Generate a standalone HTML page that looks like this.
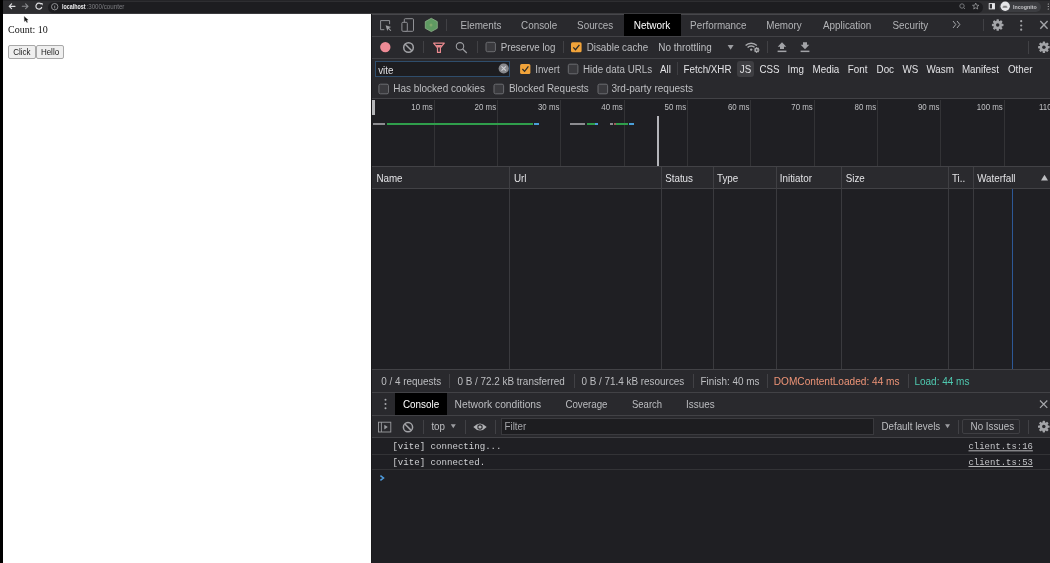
<!DOCTYPE html>
<html><head><meta charset="utf-8">
<style>
html,body{margin:0;padding:0;width:1050px;height:563px;overflow:hidden;background:#202023;}
body>div,body>svg{position:absolute;}
.t{white-space:nowrap;line-height:20px;height:20px;will-change:transform;}
</style></head><body>
<div style="left:0px;top:0px;width:1050px;height:13px;background:#2e2e31;"></div>
<div style="left:0px;top:0px;width:1050px;height:1px;background:#242427;"></div>
<div style="left:0px;top:13px;width:1050px;height:1px;background:#3a3a3d;"></div>
<div style="left:48px;top:1.5px;width:935px;height:11px;background:#1d1d20;border-radius:6px;"></div>
<div style="left:999px;top:2px;width:42px;height:10px;background:#3c3d41;border-radius:5px;"></div>
<div style="left:0px;top:0px;width:3px;height:563px;background:#000;"></div>
<svg style="left:0;top:0" width="120" height="14" viewBox="0 0 120 14">
<g stroke="#dcdcdf" stroke-width="1.2" fill="none" stroke-linecap="round">
<path d="M9.2 6.3 H15 M9.2 6.3 L11.6 3.9 M9.2 6.3 L11.6 8.7"/>
</g>
<g stroke="#8a8b8e" stroke-width="1.1" fill="none" stroke-linecap="round">
<path d="M22.3 6.3 H28 M28 6.3 L25.6 3.9 M28 6.3 L25.6 8.7"/>
</g>
<path d="M41.2 4.2 A3 3 0 1 0 41.8 7" stroke="#dcdcdf" stroke-width="1.2" fill="none"/>
<path d="M40 3 L42.6 3 L42.6 5.6 Z" fill="#dcdcdf"/>
<circle cx="54.7" cy="6.7" r="3.2" stroke="#9a9b9e" stroke-width="0.9" fill="none"/>
<path d="M54.7 5.6 V8.4" stroke="#9a9b9e" stroke-width="0.9"/>
</svg>
<svg style="left:950px;top:0" width="100" height="14" viewBox="950 0 100 14">
<circle cx="962" cy="6" r="2.2" stroke="#7c7d81" stroke-width="0.9" fill="none"/>
<path d="M963.6 7.6 L965 9" stroke="#7c7d81" stroke-width="0.9"/>
<path d="M975.7 3 L976.6 5.2 L978.9 5.3 L977.1 6.8 L977.7 9 L975.7 7.8 L973.7 9 L974.3 6.8 L972.5 5.3 L974.8 5.2 Z" stroke="#a4a5a8" stroke-width="0.7" fill="none"/>
<rect x="989.2" y="3.6" width="5.3" height="5.3" stroke="#e8e8ea" stroke-width="0.9" fill="none"/>
<rect x="992" y="3.6" width="2.5" height="5.3" fill="#e8e8ea"/>
<circle cx="1005.2" cy="6.3" r="4.7" fill="#e6e6e8"/>
<path d="M1002.6 7.2 h4.8 M1003.3 6.3 h3.4" stroke="#555" stroke-width="0.8"/>
<circle cx="1048.3" cy="4" r="0.6" fill="#ccc"/><circle cx="1048.3" cy="6.5" r="0.6" fill="#ccc"/><circle cx="1048.3" cy="9" r="0.6" fill="#ccc"/>
</svg>
<div style="left:3px;top:14px;width:369px;height:549px;background:#ffffff;"></div>
<div style="left:8px;top:45px;width:28px;height:14px;background:#efefef;border:1px solid #a8a8a8;border-radius:2px;box-sizing:border-box;"></div>
<div style="left:36px;top:45px;width:28px;height:14px;background:#efefef;border:1px solid #a8a8a8;border-radius:2px;box-sizing:border-box;"></div>
<svg style="left:22px;top:15px" width="10" height="10" viewBox="0 0 10 10">
<path d="M2.2 1.4 L2.5 6.6 L3.6 5.6 L4.9 7.6 L5.6 7.2 L4.6 5.2 L6.2 5 Z" fill="#111" stroke="#444" stroke-width="0.3"/>
</svg>
<div style="left:372px;top:14px;width:678px;height:549px;background:#1f1f23;"></div>
<div style="left:371px;top:14px;width:1px;height:549px;background:#1a1a1c;"></div>
<div style="left:372px;top:14px;width:678px;height:22px;background:#29292d;"></div>
<div style="left:372px;top:13.5px;width:678px;height:1px;background:#47474b;"></div>
<div style="left:372px;top:36px;width:678px;height:1px;background:#424246;"></div>
<div style="left:624px;top:14px;width:57px;height:22px;background:#000;"></div>
<div style="left:446.3px;top:18.8px;width:1px;height:12.2px;background:#414145;"></div>
<div style="left:982.5px;top:18.8px;width:1px;height:12.2px;background:#414145;"></div>
<svg style="left:372px;top:14px" width="100" height="22" viewBox="372 14 100 22">
<path d="M384.3 29.7 H380.6 V20.6 H389.6 V24.2" stroke="#9c9da1" stroke-width="0.9" fill="none"/>
<path d="M385.6 25.2 L391.2 27 L389 28 L391.3 30.4 L390.5 31.1 L388.2 28.8 L387.3 31 Z" fill="#9c9da1"/>
<rect x="404.3" y="18.7" width="9.2" height="12.6" rx="1" stroke="#9c9da1" stroke-width="0.9" fill="none"/>
<rect x="401.9" y="22.3" width="5.4" height="9" rx="1" stroke="#9c9da1" stroke-width="0.9" fill="#29292c"/>
<path d="M431.3 18.3 L437.3 21.6 V28.3 L431.3 31.6 L425.3 28.3 V21.6 Z" fill="#5f9a62" stroke="#8fb38c" stroke-width="0.8"/>
<circle cx="431" cy="25" r="1.5" fill="#8fb070" opacity="0.7"/>
</svg>
<svg style="left:950px;top:14px" width="100" height="22" viewBox="950 14 100 22">
<path d="M953 21 L955.8 24.5 L953 28 M957 21 L959.8 24.5 L957 28" stroke="#a8a9ad" stroke-width="1" fill="none"/>
</svg>
<svg style="left:0;top:0" width="1050" height="563" viewBox="0 0 1050 563">
<g><rect x="996.48" y="19.20" width="2.44" height="11.60" rx="0.61" transform="rotate(0 997.7 25)" fill="#a3a4a8"/><rect x="996.48" y="19.20" width="2.44" height="11.60" rx="0.61" transform="rotate(45 997.7 25)" fill="#a3a4a8"/><rect x="996.48" y="19.20" width="2.44" height="11.60" rx="0.61" transform="rotate(90 997.7 25)" fill="#a3a4a8"/><rect x="996.48" y="19.20" width="2.44" height="11.60" rx="0.61" transform="rotate(135 997.7 25)" fill="#a3a4a8"/><circle cx="997.7" cy="25" r="4.29" fill="#a3a4a8"/><circle cx="997.7" cy="25" r="1.74" fill="#29292d"/></g>
<circle cx="1021.2" cy="21.2" r="1.1" fill="#a3a4a8"/><circle cx="1021.2" cy="25.5" r="1.1" fill="#a3a4a8"/><circle cx="1021.2" cy="29.7" r="1.1" fill="#a3a4a8"/>
<path d="M1040.3 21.1 L1047.6 28.7 M1047.6 21.1 L1040.3 28.7" stroke="#a3a4a8" stroke-width="1.4"/>
</svg>
<div style="left:372px;top:37px;width:678px;height:21px;background:#29292d;"></div>
<div style="left:372px;top:58px;width:678px;height:1px;background:#424246;"></div>
<div style="left:423.4px;top:40.7px;width:1px;height:12.3px;background:#414145;"></div>
<div style="left:477px;top:40.7px;width:1px;height:12.3px;background:#414145;"></div>
<div style="left:563.3px;top:40.7px;width:1px;height:12.3px;background:#414145;"></div>
<div style="left:766.8px;top:40.7px;width:1px;height:12.3px;background:#414145;"></div>
<div style="left:1028px;top:40.8px;width:1px;height:13.2px;background:#414145;"></div>
<svg style="left:0;top:0" width="1050" height="563" viewBox="0 0 1050 563">
<circle cx="385.3" cy="47.1" r="5.2" fill="#ef8b96"/>
<circle cx="408.5" cy="47.5" r="4.8" stroke="#a2a3a7" stroke-width="1.5" fill="none"/>
<path d="M405.2 44.2 L411.8 50.8" stroke="#a2a3a7" stroke-width="1.5"/>
<path d="M433.6 43.2 H444.3 L440.4 47.8 V52.4 H437.5 V47.8 Z" stroke="#ea8a8f" stroke-width="1.2" fill="none" stroke-linejoin="round"/>
<path d="M435.6 45 H442.3 L440 47.6 H437.9 Z" fill="#ea8a8f"/>
<circle cx="460" cy="46.3" r="3.7" stroke="#9c9da1" stroke-width="1.1" fill="none"/>
<path d="M462.7 49 L466.8 53" stroke="#9c9da1" stroke-width="1.2"/>
<rect x="486" y="42.3" width="9.4" height="9.4" rx="1.5" stroke="#6c6d71" stroke-width="1" fill="#3a3a3e"/>
<rect x="571" y="42.3" width="10.6" height="10" rx="1.5" fill="#f1a33a"/>
<path d="M573.3 47.4 L575.5 49.7 L579.4 44.8" stroke="#2a2a2a" stroke-width="1.3" fill="none"/>
<path d="M727.6 45 H733.6 L730.6 49.8 Z" fill="#9c9da1"/>
<path d="M745.6 45.6 A7.8 7.8 0 0 1 756.8 45.6" stroke="#a9aaad" stroke-width="1.4" fill="none"/>
<path d="M747.6 47.6 A5 5 0 0 1 754.8 47.6" stroke="#a9aaad" stroke-width="1.4" fill="none"/>
<circle cx="751.2" cy="49.6" r="1.2" fill="#a9aaad"/>
<circle cx="756.7" cy="50" r="3.3" fill="#29292c"/>
<g><rect x="756.09" y="47.10" width="1.22" height="5.80" rx="0.30" transform="rotate(0 756.7 50)" fill="#a9aaad"/><rect x="756.09" y="47.10" width="1.22" height="5.80" rx="0.30" transform="rotate(45 756.7 50)" fill="#a9aaad"/><rect x="756.09" y="47.10" width="1.22" height="5.80" rx="0.30" transform="rotate(90 756.7 50)" fill="#a9aaad"/><rect x="756.09" y="47.10" width="1.22" height="5.80" rx="0.30" transform="rotate(135 756.7 50)" fill="#a9aaad"/><circle cx="756.7" cy="50" r="2.15" fill="#a9aaad"/><circle cx="756.7" cy="50" r="0.87" fill="#29292d"/></g>
<path d="M782 42.3 L786.3 46.8 H784 V49 H780 V46.8 H777.7 Z" fill="#a2a3a7"/>
<rect x="777.6" y="50.6" width="8.8" height="1.5" fill="#a2a3a7"/>
<path d="M805 49.2 L800.7 44.7 H803 V42.3 H807 V44.7 H809.3 Z" fill="#a2a3a7"/>
<rect x="800.6" y="50.6" width="8.8" height="1.5" fill="#a2a3a7"/>
<g><rect x="1042.68" y="41.40" width="2.44" height="11.60" rx="0.61" transform="rotate(0 1043.9 47.2)" fill="#a3a4a8"/><rect x="1042.68" y="41.40" width="2.44" height="11.60" rx="0.61" transform="rotate(45 1043.9 47.2)" fill="#a3a4a8"/><rect x="1042.68" y="41.40" width="2.44" height="11.60" rx="0.61" transform="rotate(90 1043.9 47.2)" fill="#a3a4a8"/><rect x="1042.68" y="41.40" width="2.44" height="11.60" rx="0.61" transform="rotate(135 1043.9 47.2)" fill="#a3a4a8"/><circle cx="1043.9" cy="47.2" r="4.29" fill="#a3a4a8"/><circle cx="1043.9" cy="47.2" r="1.74" fill="#29292d"/></g>
</svg>
<div style="left:372px;top:59px;width:678px;height:39px;background:#29292d;"></div>
<div style="left:372px;top:98px;width:678px;height:1px;background:#424246;"></div>
<div style="left:374.5px;top:60.5px;width:135.5px;height:16.5px;background:#1d1d20;border:1px solid #2f4d6b;box-sizing:border-box;"></div>
<svg style="left:0;top:0" width="1050" height="563" viewBox="0 0 1050 563">
<circle cx="503.7" cy="68.5" r="5.1" fill="#88898d"/>
<path d="M501.5 66.3 L505.9 70.7 M505.9 66.3 L501.5 70.7" stroke="#cfd0d3" stroke-width="1.1"/>
<rect x="520.1" y="63.9" width="10.3" height="10" rx="1.5" fill="#f1a33a"/>
<path d="M522.4 69 L524.6 71.3 L528.4 66.4" stroke="#2a2a2a" stroke-width="1.2" fill="none"/>
<rect x="568.3" y="64.2" width="9.6" height="9.6" rx="1.5" stroke="#6c6d71" stroke-width="1" fill="#3a3a3e"/>
<rect x="378.9" y="84.2" width="9.6" height="9.6" rx="1.5" stroke="#6c6d71" stroke-width="1" fill="#3a3a3e"/>
<rect x="494" y="84.2" width="9.6" height="9.6" rx="1.5" stroke="#6c6d71" stroke-width="1" fill="#3a3a3e"/>
<rect x="598" y="84.2" width="9.6" height="9.6" rx="1.5" stroke="#6c6d71" stroke-width="1" fill="#3a3a3e"/>
</svg>
<div style="left:676.8px;top:62.3px;width:1px;height:13.2px;background:#3e3e42;"></div>
<div style="left:736.9px;top:61px;width:16.8px;height:16px;background:#3e3e42;border-radius:3px;"></div>
<div style="left:372px;top:99px;width:678px;height:67px;background:#1f1f23;"></div>
<div style="left:433.8px;top:100px;width:1px;height:66px;background:#333336;"></div>
<div style="left:497.13px;top:100px;width:1px;height:66px;background:#333336;"></div>
<div style="left:560.46px;top:100px;width:1px;height:66px;background:#333336;"></div>
<div style="left:623.79px;top:100px;width:1px;height:66px;background:#333336;"></div>
<div style="left:687.12px;top:100px;width:1px;height:66px;background:#333336;"></div>
<div style="left:750.45px;top:100px;width:1px;height:66px;background:#333336;"></div>
<div style="left:813.78px;top:100px;width:1px;height:66px;background:#333336;"></div>
<div style="left:877.11px;top:100px;width:1px;height:66px;background:#333336;"></div>
<div style="left:940.44px;top:100px;width:1px;height:66px;background:#333336;"></div>
<div style="left:1003.77px;top:100px;width:1px;height:66px;background:#333336;"></div>
<div style="left:372px;top:100px;width:2.6px;height:14.5px;background:#b5b6b9;"></div>
<div style="left:373px;top:123px;width:12px;height:2px;background:#8c8c90;"></div>
<div style="left:386.8px;top:123px;width:146.2px;height:2px;background:#2f9e4b;"></div>
<div style="left:534px;top:123px;width:4.600000000000023px;height:2px;background:#4a9fd8;"></div>
<div style="left:569.5px;top:123px;width:15.299999999999955px;height:2px;background:#8c8c90;"></div>
<div style="left:586.7px;top:123px;width:8.299999999999955px;height:2px;background:#2f9e4b;"></div>
<div style="left:595.2px;top:123px;width:2.5px;height:2px;background:#4a9fd8;"></div>
<div style="left:609.9px;top:123px;width:3.3999999999999773px;height:2px;background:#8c8c90;"></div>
<div style="left:614px;top:123px;width:1.7999999999999545px;height:2px;background:#a05a5a;"></div>
<div style="left:616.2px;top:123px;width:11.799999999999955px;height:2px;background:#2f9e4b;"></div>
<div style="left:629px;top:123px;width:4.899999999999977px;height:2px;background:#4a9fd8;"></div>
<div style="left:657px;top:115.5px;width:1.6px;height:50.5px;background:#b4b5ba;"></div>
<div style="left:372px;top:165.5px;width:678px;height:1px;background:#424246;"></div>
<div style="left:372px;top:166.5px;width:678px;height:22.5px;background:#2a2a2e;"></div>
<div style="left:372px;top:188px;width:678px;height:1px;background:#424246;"></div>
<div style="left:509px;top:166.5px;width:1px;height:22px;background:#404044;"></div>
<div style="left:509px;top:189px;width:1px;height:180px;background:#3a3a3e;"></div>
<div style="left:661px;top:166.5px;width:1px;height:22px;background:#404044;"></div>
<div style="left:661px;top:189px;width:1px;height:180px;background:#3a3a3e;"></div>
<div style="left:713px;top:166.5px;width:1px;height:22px;background:#404044;"></div>
<div style="left:713px;top:189px;width:1px;height:180px;background:#3a3a3e;"></div>
<div style="left:776px;top:166.5px;width:1px;height:22px;background:#404044;"></div>
<div style="left:776px;top:189px;width:1px;height:180px;background:#3a3a3e;"></div>
<div style="left:841px;top:166.5px;width:1px;height:22px;background:#404044;"></div>
<div style="left:841px;top:189px;width:1px;height:180px;background:#3a3a3e;"></div>
<div style="left:948px;top:166.5px;width:1px;height:22px;background:#404044;"></div>
<div style="left:948px;top:189px;width:1px;height:180px;background:#3a3a3e;"></div>
<div style="left:973px;top:166.5px;width:1px;height:22px;background:#404044;"></div>
<div style="left:973px;top:189px;width:1px;height:180px;background:#3a3a3e;"></div>
<svg style="left:0;top:0" width="1050" height="563" viewBox="0 0 1050 563">
<path d="M1041 180.5 H1048 L1044.5 174.8 Z" fill="#bdbec1"/>
</svg>
<div style="left:1012.3px;top:189px;width:1px;height:180px;background:#2d5896;"></div>
<div style="left:372px;top:369px;width:678px;height:1px;background:#424246;"></div>
<div style="left:372px;top:370px;width:678px;height:22px;background:#29292d;"></div>
<div style="left:372px;top:392px;width:678px;height:1px;background:#424246;"></div>
<div style="left:449.3px;top:374px;width:1px;height:14px;background:#414145;"></div>
<div style="left:573.6px;top:374px;width:1px;height:14px;background:#414145;"></div>
<div style="left:692.6px;top:374px;width:1px;height:14px;background:#414145;"></div>
<div style="left:767px;top:374px;width:1px;height:14px;background:#414145;"></div>
<div style="left:907.5px;top:374px;width:1px;height:14px;background:#414145;"></div>
<div style="left:372px;top:393px;width:678px;height:22px;background:#29292d;"></div>
<div style="left:372px;top:415px;width:678px;height:1px;background:#424246;"></div>
<div style="left:395px;top:393.3px;width:52.4px;height:21.5px;background:#000;"></div>
<svg style="left:0;top:0" width="1050" height="563" viewBox="0 0 1050 563">
<circle cx="385.5" cy="399.8" r="1" fill="#a8a9ad"/><circle cx="385.5" cy="404" r="1" fill="#a8a9ad"/><circle cx="385.5" cy="408.2" r="1" fill="#a8a9ad"/>
<path d="M1040 400.5 L1047.3 407.8 M1047.3 400.5 L1040 407.8" stroke="#a8a9ad" stroke-width="1.2"/>
</svg>
<div style="left:372px;top:416px;width:678px;height:21.4px;background:#29292d;"></div>
<div style="left:372px;top:437.4px;width:678px;height:1px;background:#424246;"></div>
<div style="left:423px;top:420px;width:1px;height:14px;background:#414145;"></div>
<div style="left:465px;top:420px;width:1px;height:14px;background:#414145;"></div>
<div style="left:495px;top:420px;width:1px;height:14px;background:#414145;"></div>
<div style="left:958px;top:420px;width:1px;height:14px;background:#414145;"></div>
<div style="left:1028px;top:420px;width:1px;height:14px;background:#414145;"></div>
<div style="left:500.5px;top:418.3px;width:373.3px;height:16.7px;background:#1d1d20;border:1px solid #3a3a3e;box-sizing:border-box;"></div>
<div style="left:962.2px;top:419px;width:57.8px;height:14.8px;background:transparent;border:1px solid #3f3f43;box-sizing:border-box;border-radius:2px;"></div>
<svg style="left:0;top:0" width="1050" height="563" viewBox="0 0 1050 563">
<rect x="378.5" y="422.2" width="12.3" height="9.8" stroke="#9c9da1" stroke-width="0.9" fill="none"/>
<path d="M381.4 422.2 V432" stroke="#9c9da1" stroke-width="0.9"/>
<path d="M384.3 424.7 L387.8 427.1 L384.3 429.5 Z" fill="#9c9da1"/>
<circle cx="408" cy="427.2" r="4.6" stroke="#a2a3a7" stroke-width="1.5" fill="none"/>
<path d="M404.8 424 L411.2 430.4" stroke="#a2a3a7" stroke-width="1.5"/>
<path d="M450.8 424.3 H455.8 L453.3 428.3 Z" fill="#9c9da1"/>
<path d="M473.3 427 Q480 419.8 486.7 427 Q480 434.2 473.3 427 Z" fill="#b0b1b4"/>
<circle cx="480" cy="427" r="2.7" fill="#29292c"/>
<circle cx="480" cy="427" r="1.6" fill="#b0b1b4"/>
<path d="M945 424.3 H950 L947.5 428.3 Z" fill="#9c9da1"/>
<g><rect x="1042.58" y="420.80" width="2.44" height="11.60" rx="0.61" transform="rotate(0 1043.8 426.6)" fill="#a3a4a8"/><rect x="1042.58" y="420.80" width="2.44" height="11.60" rx="0.61" transform="rotate(45 1043.8 426.6)" fill="#a3a4a8"/><rect x="1042.58" y="420.80" width="2.44" height="11.60" rx="0.61" transform="rotate(90 1043.8 426.6)" fill="#a3a4a8"/><rect x="1042.58" y="420.80" width="2.44" height="11.60" rx="0.61" transform="rotate(135 1043.8 426.6)" fill="#a3a4a8"/><circle cx="1043.8" cy="426.6" r="4.29" fill="#a3a4a8"/><circle cx="1043.8" cy="426.6" r="1.74" fill="#29292d"/></g>
</svg>
<div style="left:372px;top:453.5px;width:678px;height:1px;background:#333336;"></div>
<div style="left:372px;top:469.2px;width:678px;height:1px;background:#333336;"></div>
<svg style="left:0;top:0" width="1050" height="563" viewBox="0 0 1050 563">
<path d="M380.4 475.6 L383.5 478 L380.4 480.4" stroke="#4f9de0" stroke-width="1.5" fill="none"/>
</svg>
<svg style="left:0;top:0;will-change:transform" width="1050" height="563" viewBox="0 0 1050 563"><text x="62.00" y="9.20" font-size="6.81" fill="#eeeef0" font-family="Liberation Sans" font-weight="bold" textLength="23.54" lengthAdjust="spacingAndGlyphs">localhost</text>
<text x="86.50" y="9.20" font-size="6.82" fill="#7d7e82" font-family="Liberation Sans" textLength="37.92" lengthAdjust="spacingAndGlyphs">:3000/counter</text>
<text x="1013.00" y="9.20" font-size="6.23" fill="#c4c4c7" font-family="Liberation Sans" font-weight="bold" textLength="23.71" lengthAdjust="spacingAndGlyphs">Incognito</text>
<text x="8.10" y="33.30" font-size="10.00" fill="#111" font-family="Liberation Serif">Count: 10</text>
<text x="13.20" y="55.00" font-size="8.64" fill="#222" font-family="Liberation Sans" textLength="17.33" lengthAdjust="spacingAndGlyphs">Click</text>
<text x="40.90" y="55.00" font-size="8.64" fill="#222" font-family="Liberation Sans" textLength="18.23" lengthAdjust="spacingAndGlyphs">Hello</text>
<text x="460.40" y="28.50" font-size="10.64" fill="#b3b4b7" font-family="Liberation Sans" textLength="41.06" lengthAdjust="spacingAndGlyphs">Elements</text>
<text x="521.10" y="28.50" font-size="10.64" fill="#b3b4b7" font-family="Liberation Sans" textLength="36.14" lengthAdjust="spacingAndGlyphs">Console</text>
<text x="577.10" y="28.50" font-size="10.64" fill="#b3b4b7" font-family="Liberation Sans" textLength="36.14" lengthAdjust="spacingAndGlyphs">Sources</text>
<text x="690.10" y="28.50" font-size="10.64" fill="#b3b4b7" font-family="Liberation Sans" textLength="56.39" lengthAdjust="spacingAndGlyphs">Performance</text>
<text x="766.20" y="28.50" font-size="10.64" fill="#b3b4b7" font-family="Liberation Sans" textLength="35.57" lengthAdjust="spacingAndGlyphs">Memory</text>
<text x="823.00" y="28.50" font-size="10.64" fill="#b3b4b7" font-family="Liberation Sans" textLength="48.19" lengthAdjust="spacingAndGlyphs">Application</text>
<text x="892.50" y="28.50" font-size="10.64" fill="#b3b4b7" font-family="Liberation Sans" textLength="35.58" lengthAdjust="spacingAndGlyphs">Security</text>
<text x="633.70" y="28.50" font-size="10.80" fill="#ffffff" font-family="Liberation Sans" textLength="36.68" lengthAdjust="spacingAndGlyphs">Network</text>
<text x="500.70" y="51.40" font-size="10.53" fill="#bdbec1" font-family="Liberation Sans" textLength="54.74" lengthAdjust="spacingAndGlyphs">Preserve log</text>
<text x="586.70" y="51.40" font-size="10.58" fill="#bdbec1" font-family="Liberation Sans" textLength="61.56" lengthAdjust="spacingAndGlyphs">Disable cache</text>
<text x="658.30" y="51.40" font-size="10.69" fill="#bdbec1" font-family="Liberation Sans" textLength="53.38" lengthAdjust="spacingAndGlyphs">No throttling</text>
<text x="378.20" y="73.60" font-size="10.58" fill="#e0e0e3" font-family="Liberation Sans" textLength="15.25" lengthAdjust="spacingAndGlyphs">vite</text>
<text x="535.20" y="72.90" font-size="10.58" fill="#bdbec1" font-family="Liberation Sans" textLength="24.51" lengthAdjust="spacingAndGlyphs">Invert</text>
<text x="583.00" y="72.80" font-size="10.58" fill="#bdbec1" font-family="Liberation Sans" textLength="69.18" lengthAdjust="spacingAndGlyphs">Hide data URLs</text>
<text x="660.10" y="72.80" font-size="10.58" fill="#e3e3e6" font-family="Liberation Sans" textLength="10.89" lengthAdjust="spacingAndGlyphs">All</text>
<text x="683.60" y="72.80" font-size="10.58" fill="#e3e3e6" font-family="Liberation Sans" textLength="47.92" lengthAdjust="spacingAndGlyphs">Fetch/XHR</text>
<text x="739.80" y="72.80" font-size="10.58" fill="#e3e3e6" font-family="Liberation Sans" textLength="11.44" lengthAdjust="spacingAndGlyphs">JS</text>
<text x="759.40" y="72.80" font-size="10.58" fill="#e3e3e6" font-family="Liberation Sans" textLength="20.15" lengthAdjust="spacingAndGlyphs">CSS</text>
<text x="787.60" y="72.80" font-size="10.58" fill="#e3e3e6" font-family="Liberation Sans" textLength="16.34" lengthAdjust="spacingAndGlyphs">Img</text>
<text x="812.60" y="72.80" font-size="10.58" fill="#e3e3e6" font-family="Liberation Sans" textLength="26.69" lengthAdjust="spacingAndGlyphs">Media</text>
<text x="847.80" y="72.80" font-size="10.58" fill="#e3e3e6" font-family="Liberation Sans" textLength="19.61" lengthAdjust="spacingAndGlyphs">Font</text>
<text x="876.60" y="72.80" font-size="10.58" fill="#e3e3e6" font-family="Liberation Sans" textLength="17.43" lengthAdjust="spacingAndGlyphs">Doc</text>
<text x="902.50" y="72.80" font-size="10.58" fill="#e3e3e6" font-family="Liberation Sans" textLength="15.79" lengthAdjust="spacingAndGlyphs">WS</text>
<text x="926.40" y="72.80" font-size="10.58" fill="#e3e3e6" font-family="Liberation Sans" textLength="27.40" lengthAdjust="spacingAndGlyphs">Wasm</text>
<text x="961.90" y="72.80" font-size="10.58" fill="#e3e3e6" font-family="Liberation Sans" textLength="37.04" lengthAdjust="spacingAndGlyphs">Manifest</text>
<text x="1008.00" y="72.80" font-size="10.58" fill="#e3e3e6" font-family="Liberation Sans" textLength="24.51" lengthAdjust="spacingAndGlyphs">Other</text>
<text x="393.20" y="92.30" font-size="10.80" fill="#bdbec1" font-family="Liberation Sans" textLength="91.72" lengthAdjust="spacingAndGlyphs">Has blocked cookies</text>
<text x="509.00" y="92.30" font-size="10.69" fill="#bdbec1" font-family="Liberation Sans" textLength="79.80" lengthAdjust="spacingAndGlyphs">Blocked Requests</text>
<text x="611.40" y="92.30" font-size="10.85" fill="#bdbec1" font-family="Liberation Sans" textLength="81.56" lengthAdjust="spacingAndGlyphs">3rd-party requests</text>
<text x="432.80" y="110.20" font-size="8.53" fill="#c0c1c4" font-family="Liberation Sans" textLength="21.51" lengthAdjust="spacingAndGlyphs" text-anchor="end">10 ms</text>
<text x="496.13" y="110.20" font-size="8.53" fill="#c0c1c4" font-family="Liberation Sans" textLength="21.51" lengthAdjust="spacingAndGlyphs" text-anchor="end">20 ms</text>
<text x="559.46" y="110.20" font-size="8.53" fill="#c0c1c4" font-family="Liberation Sans" textLength="21.51" lengthAdjust="spacingAndGlyphs" text-anchor="end">30 ms</text>
<text x="622.79" y="110.20" font-size="8.53" fill="#c0c1c4" font-family="Liberation Sans" textLength="21.51" lengthAdjust="spacingAndGlyphs" text-anchor="end">40 ms</text>
<text x="686.12" y="110.20" font-size="8.53" fill="#c0c1c4" font-family="Liberation Sans" textLength="21.51" lengthAdjust="spacingAndGlyphs" text-anchor="end">50 ms</text>
<text x="749.45" y="110.20" font-size="8.53" fill="#c0c1c4" font-family="Liberation Sans" textLength="21.51" lengthAdjust="spacingAndGlyphs" text-anchor="end">60 ms</text>
<text x="812.78" y="110.20" font-size="8.53" fill="#c0c1c4" font-family="Liberation Sans" textLength="21.51" lengthAdjust="spacingAndGlyphs" text-anchor="end">70 ms</text>
<text x="876.11" y="110.20" font-size="8.53" fill="#c0c1c4" font-family="Liberation Sans" textLength="21.51" lengthAdjust="spacingAndGlyphs" text-anchor="end">80 ms</text>
<text x="939.44" y="110.20" font-size="8.53" fill="#c0c1c4" font-family="Liberation Sans" textLength="21.51" lengthAdjust="spacingAndGlyphs" text-anchor="end">90 ms</text>
<text x="1002.77" y="110.20" font-size="8.53" fill="#c0c1c4" font-family="Liberation Sans" textLength="25.91" lengthAdjust="spacingAndGlyphs" text-anchor="end">100 ms</text>
<text x="1039.00" y="110.40" font-size="8.53" fill="#c0c1c4" font-family="Liberation Sans" textLength="12.59" lengthAdjust="spacingAndGlyphs">110</text>
<text x="376.40" y="181.60" font-size="10.58" fill="#e3e3e6" font-family="Liberation Sans" textLength="26.14" lengthAdjust="spacingAndGlyphs">Name</text>
<text x="514.00" y="181.60" font-size="10.58" fill="#e3e3e6" font-family="Liberation Sans" textLength="12.52" lengthAdjust="spacingAndGlyphs">Url</text>
<text x="665.20" y="181.60" font-size="10.58" fill="#e3e3e6" font-family="Liberation Sans" textLength="27.78" lengthAdjust="spacingAndGlyphs">Status</text>
<text x="717.00" y="181.60" font-size="10.58" fill="#e3e3e6" font-family="Liberation Sans" textLength="21.25" lengthAdjust="spacingAndGlyphs">Type</text>
<text x="779.80" y="181.60" font-size="10.58" fill="#e3e3e6" font-family="Liberation Sans" textLength="32.14" lengthAdjust="spacingAndGlyphs">Initiator</text>
<text x="845.70" y="181.60" font-size="10.58" fill="#e3e3e6" font-family="Liberation Sans" textLength="19.06" lengthAdjust="spacingAndGlyphs">Size</text>
<text x="952.00" y="181.60" font-size="10.58" fill="#e3e3e6" font-family="Liberation Sans" textLength="13.25" lengthAdjust="spacingAndGlyphs">Ti..</text>
<text x="977.20" y="181.60" font-size="10.58" fill="#e3e3e6" font-family="Liberation Sans" textLength="38.30" lengthAdjust="spacingAndGlyphs">Waterfall</text>
<text x="381.20" y="385.00" font-size="10.69" fill="#bdbec1" font-family="Liberation Sans" textLength="59.99" lengthAdjust="spacingAndGlyphs">0 / 4 requests</text>
<text x="457.40" y="385.00" font-size="10.69" fill="#bdbec1" font-family="Liberation Sans" textLength="107.31" lengthAdjust="spacingAndGlyphs">0 B / 72.2 kB transferred</text>
<text x="581.40" y="385.00" font-size="10.69" fill="#bdbec1" font-family="Liberation Sans" textLength="102.90" lengthAdjust="spacingAndGlyphs">0 B / 71.4 kB resources</text>
<text x="700.50" y="385.00" font-size="10.69" fill="#bdbec1" font-family="Liberation Sans" textLength="58.87" lengthAdjust="spacingAndGlyphs">Finish: 40 ms</text>
<text x="773.80" y="385.00" font-size="10.91" fill="#ee9477" font-family="Liberation Sans" textLength="125.76" lengthAdjust="spacingAndGlyphs">DOMContentLoaded: 44 ms</text>
<text x="914.40" y="385.00" font-size="10.80" fill="#4fc9b0" font-family="Liberation Sans" textLength="55.04" lengthAdjust="spacingAndGlyphs">Load: 44 ms</text>
<text x="402.90" y="407.80" font-size="10.69" fill="#ffffff" font-family="Liberation Sans" textLength="36.32" lengthAdjust="spacingAndGlyphs">Console</text>
<text x="454.60" y="407.90" font-size="11.07" fill="#bcbdc0" font-family="Liberation Sans" textLength="86.60" lengthAdjust="spacingAndGlyphs">Network conditions</text>
<text x="565.40" y="407.90" font-size="10.48" fill="#bcbdc0" font-family="Liberation Sans" textLength="42.06" lengthAdjust="spacingAndGlyphs">Coverage</text>
<text x="632.00" y="407.90" font-size="10.26" fill="#bcbdc0" font-family="Liberation Sans" textLength="30.10" lengthAdjust="spacingAndGlyphs">Search</text>
<text x="686.10" y="407.90" font-size="10.69" fill="#bcbdc0" font-family="Liberation Sans" textLength="28.61" lengthAdjust="spacingAndGlyphs">Issues</text>
<text x="504.50" y="429.90" font-size="10.58" fill="#a5a6aa" font-family="Liberation Sans" textLength="21.78" lengthAdjust="spacingAndGlyphs">Filter</text>
<text x="431.40" y="429.90" font-size="10.58" fill="#bdbec1" font-family="Liberation Sans" textLength="13.62" lengthAdjust="spacingAndGlyphs">top</text>
<text x="881.40" y="429.90" font-size="10.58" fill="#bdbec1" font-family="Liberation Sans" textLength="58.83" lengthAdjust="spacingAndGlyphs">Default levels</text>
<text x="970.60" y="429.90" font-size="10.58" fill="#bdbec1" font-family="Liberation Sans" textLength="43.57" lengthAdjust="spacingAndGlyphs">No Issues</text>
<text x="392.40" y="449.40" font-size="9.10" fill="#d0d1d4" font-family="Liberation Mono">[vite] connecting...</text>
<text x="392.40" y="465.00" font-size="9.10" fill="#d0d1d4" font-family="Liberation Mono">[vite] connected.</text>
<text x="968.50" y="449.40" font-size="8.95" fill="#c4c5c8" font-family="Liberation Mono" style="text-decoration:underline">client.ts:16</text>
<text x="968.50" y="465.00" font-size="8.95" fill="#c4c5c8" font-family="Liberation Mono" style="text-decoration:underline">client.ts:53</text></svg>
</body></html>
